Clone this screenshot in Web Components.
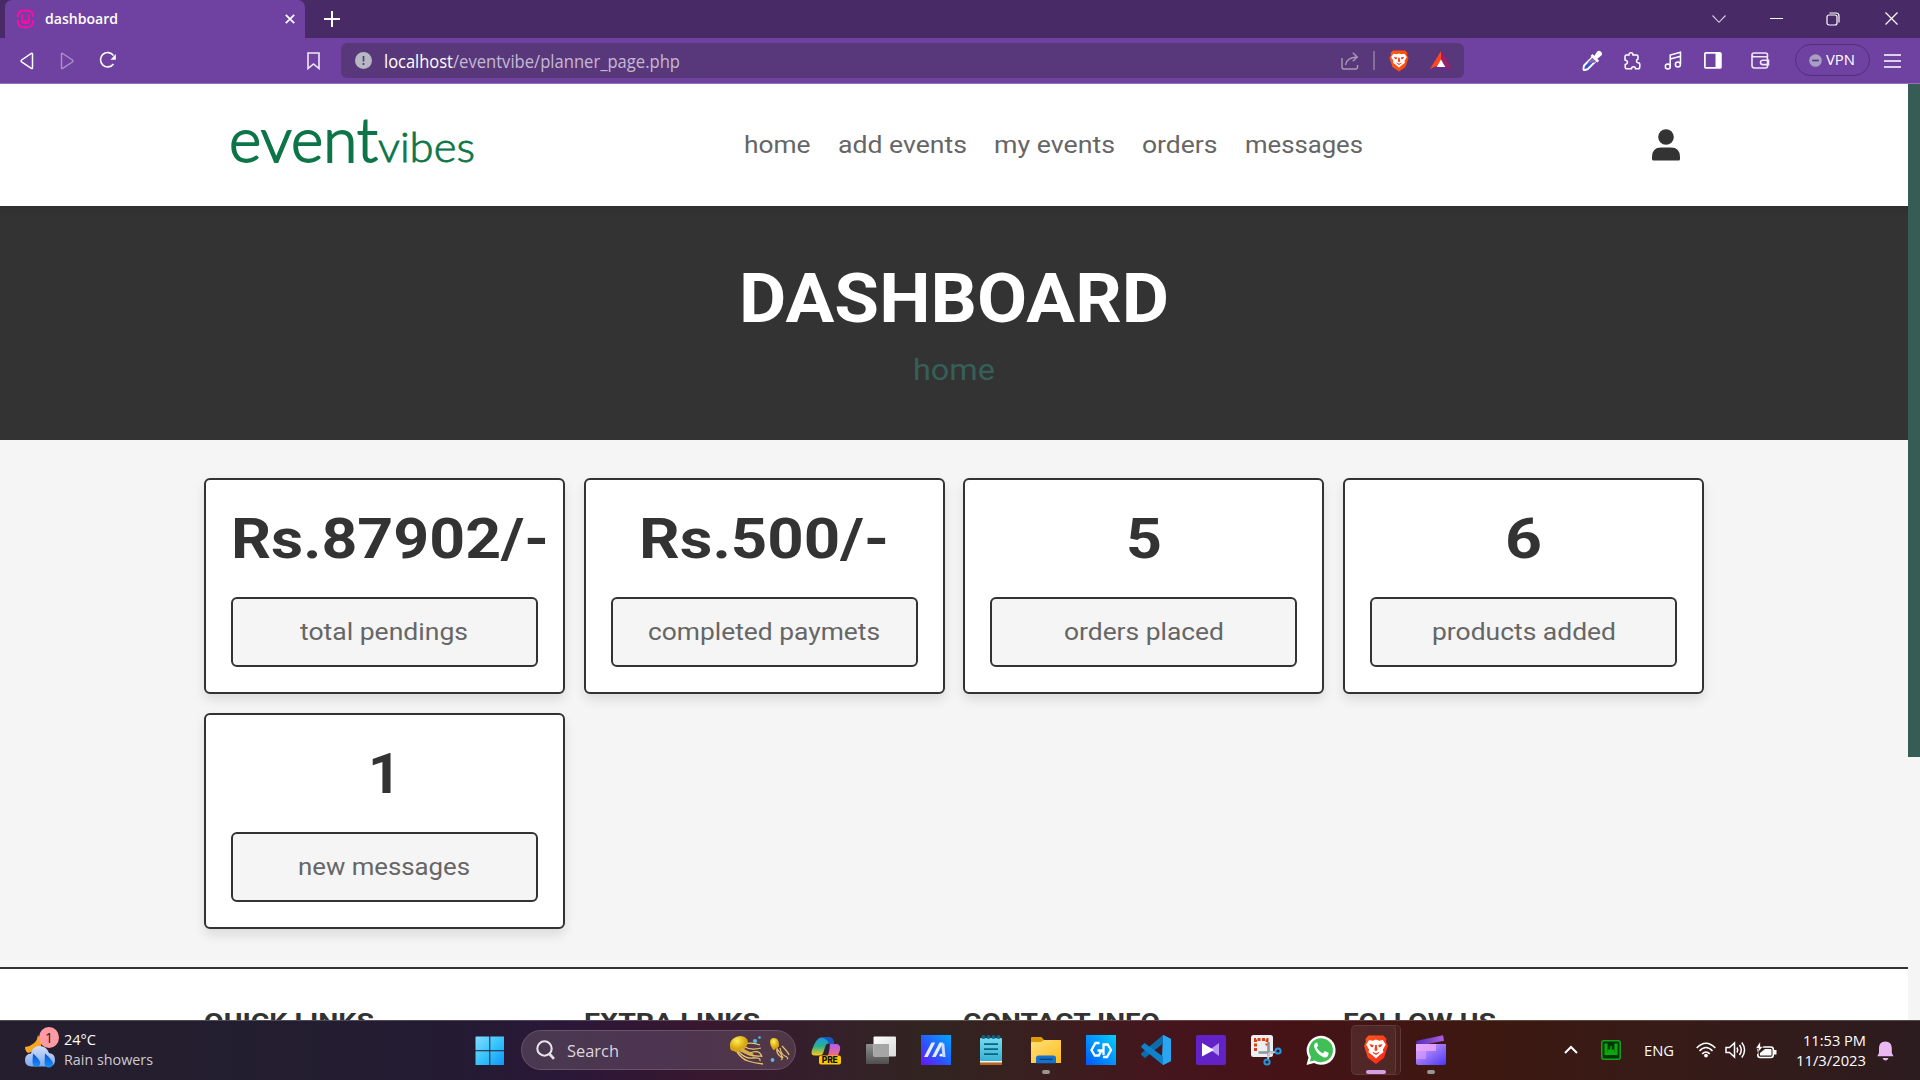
<!DOCTYPE html>
<html lang="en">
<head>
<meta charset="utf-8">
<title>dashboard</title>
<style>
html,body{margin:0;padding:0}
body{width:1920px;height:1080px;overflow:hidden;font-family:Roboto,"Liberation Sans",sans-serif;background:#f5f5f5}
</style>
</head>
<body>
<desktop-screen></desktop-screen>
<script>
// Icons, each drawn in a viewBox equal to its pixel size.
const lion = `<path d="M5 1.500h12l2.500 2.500-.5 2 1.500 3-3 9-6.500 4.500L4.500 18l-3-9L3 6l-.5-2z" fill="url(#bg)"/><path d="M5.500 4.800l3 .5 2.500-.8 2.500.8 3-.5 2.300 3.300-2.300 4 .5 1.700-3 2.200-3 2.500-3-2.500-3-2.200.5-1.700-2.300-4z" fill="#fff"/><path d="M5.800 7.800l3.400.8-.6 1.600-1.600-.2zM16.200 7.800l-3.400.8.6 1.600 1.600-.2zM10.400 8.500h1.200l.6 3.700-1.200 1-1.200-1zM8.200 13.500l2.800 1.200 2.800-1.200-.6 1.100L11 15.900l-2.200-1.300z" fill="#f2401b"/>`;
const ICONS = {
 favicon:[19,20,`<g fill="none" stroke="#ff0aa8" stroke-width="2"><path d="M2 8V6Q2.500 1.500 9.500 1.500T17 6v2M2 11v3q.5 4.500 7.500 4.500T17 14v-3"/><path d="M6.200 5.500V11q0 3 1.800 3 1.500 0 1.500-3 0 3 1.500 3 1.800 0 1.800-3V5.500" stroke-width="1.800"/></g>`],
 tabx:[10,10,`<path d="M.8.800l8.400 8.400M9.200.800L.8 9.200" stroke="#fff" stroke-width="1.700"/>`],
 plus:[16,16,`<path d="M8 0v16M0 8h16" stroke="#fff" stroke-width="2"/>`],
 chev:[14,8,`<path d="M.5.500L7 7.300 13.500.500" fill="none" stroke="#d8d0e2" stroke-width="1.100"/>`],
 min:[13,2,`<path d="M0 .5h13" stroke="#fff" stroke-width="1"/>`],
 restore:[14,14,`<g fill="none" stroke="#fff" stroke-width="1.200"><rect x="1" y="3" width="10" height="10" rx="2"/><path d="M3.500 1H10q3 0 3 3v6.500"/></g>`],
 close:[13,13,`<path d="M.5.500l12 12M12.500.500l-12 12" stroke="#fff" stroke-width="1.200"/>`],
 back:[14,18,`<path d="M12.500 2.200v13.600q0 1.200-1.200.5L1.600 10q-1-1 0-2l9.700-6.500q1.200-.6 1.200.7z" fill="none" stroke="#fff" stroke-width="1.500"/>`],
 fwd:[14,18,`<path d="M1.500 2.200v13.600q0 1.200 1.200.5l9.700-6.300q1-1 0-2L2.700 1.500q-1.200-.6-1.200.7z" fill="none" stroke="#ad8fcb" stroke-width="1.400"/>`],
 reload:[18,18,`<path d="M14.500 4.500A7.200 7.200 0 1 0 14.500 13" fill="none" stroke="#fff" stroke-width="1.600"/><path d="M16.800 3v5.800h-5.300z" fill="#fff"/>`],
 mark:[13,18,`<path d="M1 1h11v15.500L6.500 12 1 16.500z" fill="none" stroke="#eee8f5" stroke-width="1.600"/>`],
 info:[17,17,`<circle cx="8.500" cy="8.500" r="8.500" fill="#b7b8c1"/><path d="M8.500 4v5.500M8.500 11v2" stroke="#59387b" stroke-width="1.700"/>`],
 share:[18,18,`<path d="M1 6v9q0 2 2 2h11.500q2 0 2-2v-2M4.500 13Q5.500 5.500 16 5M11.800.800L16.300 5l-4.500 4.300" fill="none" stroke="#a79ab5" stroke-width="1.400"/>`],
 sep:[2,19,`<path d="M1 0v19" stroke="#9c8bad" stroke-width="1.300"/>`],
 brave:[22,24,`<defs><linearGradient id="bg"><stop stop-color="#ff5a1c"/><stop offset="1" stop-color="#ff4a00"/></linearGradient></defs>`+lion],
 bat:[22,20,`<path d="M11 0L0 18l11-5z" fill="#ff4724"/><path d="M11 0l11 18-5-1z" fill="#9e1f63"/><path d="M11 0v8l6 9 5 1z" fill="#9e1f63"/><path d="M0 19h22l-5-3H5z" fill="#662d91"/><path d="M11 8.500L15.300 16H6.700z" fill="#fff"/>`],
 pick:[20,22,`<path d="M3 20q-2 .5-1.500-1.500l.5-3L11 6.500l3.700 3.700-9 9z" fill="#3856c7" stroke="#fff" stroke-width="1.900"/><path d="M5.500 12.500L11 7l3.700 3.700-2 2z" fill="#8d62b4"/><path d="M9.500 5l6.700 6.700M12 8.500l4.500-5.200" stroke="#fff" stroke-width="2.600"/><path d="M12 6.500l3-4.700q2-2 4 0t.3 3.800L14.500 9.500z" fill="#fff"/>`],
 puzzle:[18,18,`<path d="M2 4.500q0-1.500 1.500-1.500H6q0-2.200 2-2.200T10 3h3.500q1.500 0 1.500 1.500V7q-1.500.3-1.500 1.900T15 10.700q1.800 0 1.800 1.300v3q0 1.800-1.800 1.800h-2.500q0-2-2-2t-2 2H4q-1.800 0-1.800-1.800v-2.500Q4.500 12 4.500 10.300T2 8z" fill="none" stroke="#fff" stroke-width="1.500"/>`],
 music:[18,19,`<g fill="none" stroke="#fff" stroke-width="1.500"><path d="M6.200 15.500V4L16.500 1.200V13M6.200 8l10.300-2.800"/><circle cx="3.800" cy="15.500" r="2.500"/><circle cx="13.900" cy="13.500" r="2.500"/></g>`],
 panel:[18,17,`<rect x=".9" y=".9" width="16" height="15" rx="1" fill="none" stroke="#fff" stroke-width="1.700"/><path d="M11.500 1h5.500v15h-5.500z" fill="#fff"/>`],
 wallet:[19,17,`<g fill="none" stroke="#eee8f5" stroke-width="1.600"><path d="M16.500 5V3q0-2-2-2H3Q1 1 1 3v10.500q0 2.500 2.500 2.500h11q2 0 2-2M1 3q0 1.800 2 1.800h11.500q2 0 2 2v7.500"/><path d="M17.500 8.200h-5.500q-2.500 0-2.500 2.200t2.500 2.200h5.500z"/></g>`],
 vdot:[13,13,`<circle cx="6.500" cy="6.500" r="6.300" fill="#a89fc4"/><path d="M3.200 6.500h6.600" stroke="#5b3a83" stroke-width="1.700"/>`],
 menu:[17,14,`<path d="M0 1h17M0 7h17M0 13h17" stroke="#fff" stroke-width="1.500"/>`],
 user:[28,32,`<ellipse cx="14" cy="8" rx="7.800" ry="7.800" fill="#333"/><path d="M0 31v-3Q0 18.500 9 18.500h10q9 0 9 9.500v2q0 1.500-1.500 1.500h-25Q0 31.500 0 30z" fill="#333"/>`],
 weather:[31,34,`<defs><linearGradient id="cl" x2="0" y2="1"><stop stop-color="#d3dffc"/><stop offset="1" stop-color="#7ea9ee"/></linearGradient><linearGradient id="dr" x2="0" y2="1"><stop stop-color="#0c4fd0"/><stop offset="1" stop-color="#1793ff"/></linearGradient></defs><path d="M13 0Q12 10 0 12q0 4 3 6l13-4V4q-2-1-3-4z" fill="#f6a623"/><path d="M6.500 31.500Q0 31 0 25t6-6.500Q7.500 11 14.500 11T24 18q6 .5 6 7t-6.500 6.500z" fill="url(#cl)"/><path d="M8 18.500q7 6 7.300 9.500-.3 3.500-3.800 3.500T7.500 28q0-3 .5-9.500zM20 18.500q7.500 6.500 8 10-.3 4-4.200 4t-4.300-4.500z" fill="url(#dr)"/>`],
 win:[30,30,`<defs><linearGradient id="wg" gradientUnits="userSpaceOnUse" x1="0" y1="0" x2="30" y2="30"><stop stop-color="#86dcff"/><stop offset=".5" stop-color="#36c4fb"/><stop offset="1" stop-color="#0a94fb"/></linearGradient></defs><path d="M1 .5h13.300v13.700H.5V1zM15.300.500H29v13.700H15.300zM.5 15.300h13.800V29H.5zM15.300 15.300H29V29H15.300z" fill="url(#wg)"/>`],
 search:[19,20,`<circle cx="8.500" cy="8.500" r="7.200" fill="none" stroke="#e8e0ea" stroke-width="2.100"/><path d="M13.500 14l4.500 4.800" stroke="#e8e0ea" stroke-width="2.600"/>`],
 jelly:[62,32,`<defs><radialGradient id="jg" cx=".4" cy=".3"><stop stop-color="#fff04d"/><stop offset="1" stop-color="#d7a514"/></radialGradient></defs><g fill="none" stroke="#e9c36c" stroke-width="1.300"><path d="M11 14q6 5 13 3t9 5M9 16q7 8 15 7t7 3M14 11q8 5 18 2M8 17q5 7 11 9t15 3M12 15q8 7 20 6M15 9q8-2 16 1"/><path d="M48 13q-1 5 3 8t1 4M51 13q1 6 5 8t2 3M48 14q4 4 6 9M53 11q6 6 7 9" stroke-width="1.200"/></g><path d="M1 12Q0 5 7 2t11 2q2 3-1 8-1 3-6 3-3 4-6 1Q1 16 1 12z" fill="url(#jg)"/><path d="M41 7q0-4 4-4 5 0 5 7 0 3-3 3-2 4-4 0-2-3-2-6z" fill="url(#jg)"/><path d="M13 13l12 6-3 2-12-5z" fill="#d8ad4b"/><circle cx="26" cy="6" r="2.100" fill="#59b9e8"/><circle cx="30.500" cy="2.500" r="1.300" fill="#59b9e8"/><circle cx="43.500" cy="25" r="1.900" fill="#59b9e8"/>`],
 copilot:[30,28,`<defs><linearGradient id="c1" x2="0" y2="1"><stop stop-color="#1798e8"/><stop offset=".5" stop-color="#2fb08d"/><stop offset="1" stop-color="#ffcb18"/></linearGradient><linearGradient id="c2" x2="0" y2="1"><stop stop-color="#b15cf0"/><stop offset="1" stop-color="#ff6d6d"/></linearGradient></defs><path d="M0 13Q4 1 9 .5h9q3 0 4 6h-6q-2 0-3 4l-2 6q-1 2-4 2H3q-5 0-3-5.500z" fill="url(#c1)"/><path d="M9 .5h9q3 0 4 6h-5q-2-5-8-6z" fill="#1657c4"/><path d="M18 7h7q4 1 3 6l-3 8H14q3-1 4-14z" fill="url(#c2)"/><rect x="7" y="18.500" width="22" height="9" rx="2" fill="#ffc900"/><text x="9.800" y="26.200" font-family="Inter,sans-serif" font-size="8.500" font-weight="800" textLength="16" fill="#111">PRE</text>`],
 task:[31,29,`<defs><linearGradient id="t1" x2="1" y2="1"><stop stop-color="#fff"/><stop offset="1" stop-color="#d8d8d8"/></linearGradient><linearGradient id="t2" x2="0" y2="1"><stop stop-color="#8e8e8e"/><stop offset="1" stop-color="#4f4f4f"/></linearGradient></defs><rect y="8" width="23" height="20" rx="1" fill="url(#t2)"/><rect x="7.500" y=".5" width="22.500" height="20" rx="1" fill="url(#t1)"/><path d="M7.500 8H23v12.500H7.500z" fill="#a6a6a6"/>`],
 ma:[30,30,`<defs><linearGradient id="m1" x1="0" y1="1" x2="1" y2="0"><stop stop-color="#6a12ff"/><stop offset=".5" stop-color="#245fff"/><stop offset="1" stop-color="#00a8ff"/></linearGradient></defs><path d="M0 0h30v30H0z" fill="url(#m1)"/><path d="M3 22L10.500 7.500h3.700L6.700 22zM11 22L18.500 7.500h3.700L14.700 22z" fill="#e4ecff"/><path d="M20.300 8.500h3L24.500 22h-3z" fill="#cfdcff"/><circle cx="20" cy="20.200" r="1.400" fill="#fff"/>`],
 note:[23,30,`<defs><linearGradient id="n1" x2="0" y2="1"><stop stop-color="#76d9ee"/><stop offset="1" stop-color="#37b1d3"/></linearGradient></defs><path d="M0 27h22v3H0z" fill="#b5651d"/><path d="M0 24h22v3.500H0z" fill="#f2f2f2"/><rect y="3" width="22" height="23" rx="1" fill="url(#n1)"/><path d="M4 9.200h14M4 14.200h14M4 19.200h14" stroke="#066583" stroke-width="1.800"/><g fill="#086989"><circle cx="3.500" cy="2" r="2"/><circle cx="8.500" cy="2" r="2"/><circle cx="13.500" cy="2" r="2"/><circle cx="18.500" cy="2" r="2"/></g>`],
 folder:[30,28,`<defs><linearGradient id="f1" x2="1" y2="1"><stop stop-color="#ffe07a"/><stop offset="1" stop-color="#ffbd1c"/></linearGradient></defs><path d="M0 2Q0 1 1 1h9q1 0 3 3h16q1 0 1 1v8H0z" fill="#dc9b06"/><path d="M0 7q0-1 1-1h9l3-2h16q1 0 1 1v22H0z" fill="url(#f1)"/><path d="M5 27.300V22q0-2.500 2.500-2.500h15Q25 19.500 25 22v5.300z" fill="#1272cc"/><path d="M8.500 23.300h13" stroke="#07417d" stroke-width="1.300"/>`],
 gg:[30,30,`<defs><linearGradient id="g1" x1="0" y1="1" x2="1" y2="0"><stop stop-color="#0058ff"/><stop offset="1" stop-color="#00d0ff"/></linearGradient></defs><path d="M0 0h30v30H0z" fill="url(#g1)"/><path d="M13.500 8H9.500L5.500 15l3.300 5.500h4l2.700-5H11.500M17 22h4l4-7-3.300-5.500h-4.200V20" fill="none" stroke="#fff" stroke-width="2.300"/>`],
 code:[30,30,`<path d="M22 0l8 4v22l-8 4-1-8z" fill="#2aa5f0"/><path d="M22 0v8.500L4 23l-3.700-3L0 18.500z" fill="#0a6dac"/><path d="M0 11.500L3.500 8 22 21.500V30L1 13z" fill="#0e83cb"/><path d="M22 0l8 4v22l-8 4z" fill="#2aa5f0"/>`],
 vidp:[30,30,`<rect width="30" height="30" rx="2" fill="#6322c8"/><path d="M23 8v13l-9-6.500z" fill="#b798ea"/><path d="M6 8l12 7-12 6.500z" fill="#fff"/>`],
 snip:[31,31,`<rect width="22" height="22" rx="2.500" fill="#eeeff2"/><path d="M4.500 16V4.500H16v6" fill="none" stroke="#d9400f" stroke-width="3" stroke-dasharray="3 1.500"/><path d="M17.500 7v14M7.500 17.500h15" stroke="#8f959e" stroke-width="2.600"/><path d="M18 18l-1 6M18 18l6-1" stroke="#ccc" stroke-width="2"/><g fill="none" stroke="#209ae2" stroke-width="2"><circle cx="27" cy="16" r="2.600"/><circle cx="16" cy="27" r="2.600"/></g>`],
 wa:[31,31,`<path d="M.5 30l2-7.500A14.500 14.500 0 1 1 8 28z" fill="#fff"/><path d="M3.800 26.600l1.200-4.700a12 12 0 1 1 3.800 3.600z" fill="#3fbf55"/><path d="M10.500 7.500q-3 1-2.300 4.500 2 7 9.300 10.300 4 1 5-3v-1.500l-3.600-1.900-2 2.300q-4-1.500-6-5.800l1.300-1.900-1.200-3z" fill="#fff"/>`],
 brave2:[26,31,`<defs><linearGradient id="bg" x2="1" y2="1"><stop stop-color="#ff5b1c"/><stop offset="1" stop-color="#ff1f18"/></linearGradient></defs><g transform="translate(-.8 -1.500) scale(1.250 1.350)">${lion}</g>`],
 clip:[31,31,`<defs><linearGradient id="k1" x2="1" y2="1"><stop stop-color="#e0a8fa"/><stop offset="1" stop-color="#4a38f5"/></linearGradient><linearGradient id="k2"><stop stop-color="#4d30b8"/><stop offset="1" stop-color="#b05ce8"/></linearGradient></defs><path d="M0 6L27 .3l1 5.400L1 11z" fill="url(#k2)"/><path d="M0 9h30v19q0 2-2 2H2q-2 0-2-2z" fill="url(#k1)"/><path d="M0 9h20v7H0z" fill="#efaafa" opacity=".75"/><path d="M0 16h10v8H0z" fill="#e0a0ff" opacity=".6"/>`],
 up:[14,8,`<path d="M1 7l6-6 6 6" fill="none" stroke="#fff" stroke-width="2"/>`],
 wamp:[20,20,`<rect x=".8" y=".8" width="18.400" height="18.400" rx="2" fill="#03350a" stroke="#17a41c" stroke-width="1.500"/><path d="M5 3.500v10h3.500V11h3v2.500H15v-10" fill="none" stroke="#0aa80a" stroke-width="3.200"/><path d="M10 6v6" stroke="#0aa80a" stroke-width="1.500"/>`],
 wifi:[20,16,`<g fill="none" stroke="#fff" stroke-width="1.600"><path d="M.7 6Q10-3.500 19.300 6"/><path d="M3.500 9Q10 2 16.500 9"/><path d="M6.200 11.800q3.800-3.600 7.600 0"/></g><circle cx="10" cy="13.600" r="1.900" fill="#fff"/>`],
 sound:[21,18,`<g fill="none" stroke="#fff" stroke-width="1.500"><path d="M1 6.500h3.500L9.500 2v14l-5-4.500H1z"/><path d="M12 6.500q1.500 2.500 0 5M14.500 4q3.500 5 0 10M16.800 1.500q5.500 7.500 0 15"/></g>`],
 battery:[21,17,`<rect x="1.800" y="5" width="15.500" height="10.500" rx="2.500" fill="none" stroke="#fff" stroke-width="1.600"/><path d="M4 13.500V11L9 7h5.500q1 0 1 1v5.500zM18 8h2.500v4.500H18z" fill="#fff"/><path d="M4.500-1L-.5 6.500h3L1 12l6-7.500H4.500z" fill="#fff" stroke="#371b17" stroke-width=".8"/>`],
 bell:[17,20,`<path d="M.3 15.300L2 12V7Q2 .5 8.300.500T14.800 7v5l1.700 3.300z" fill="#ebb9f2"/><path d="M5.500 17h6q-1 2.500-3 2.500t-3-2.500z" fill="#ebb9f2"/>`]
};

const define=(name,html,hook)=>customElements.define(name,class extends HTMLElement{
  connectedCallback(){
    if(this.shadowRoot)return;
    const t=document.createElement('template');
    t.innerHTML=typeof html==='function'?html(this):html;
    this.attachShadow({mode:'open'}).append(document.importNode(t.content,true));
    if(hook)hook(this);
  }
});
// A single line of text set to an exact measure.
define('fit-text',`<style>:host{display:block;flex:none;white-space:nowrap}span{display:inline-block;transform-origin:0 0}</style><span><slot></slot></span>`,el=>{
  const w=+el.getAttribute('w'),s=el.shadowRoot.querySelector('span');
  el.style.width=w+'px';
  const fit=()=>{s.style.transform='none';const n=s.getBoundingClientRect().width;if(n)s.style.transform=`scaleX(${w/n})`};
  fit();requestAnimationFrame(fit);
});
define('ui-icon',el=>{const[w,h,b]=ICONS[el.getAttribute('name')];return `<style>:host{display:block;flex:none;width:${w}px;height:${h}px}svg{display:block;overflow:visible}</style><svg width="${w}" height="${h}" viewBox="0 0 ${w} ${h}">${b}</svg>`});

// Builds a horizontal strip: each entry is [start, width, markup, vertical nudge].
const strip=(items,from=0)=>{let p=from;return items.map(([x,w,h,dy=0])=>{const m=x-p;p=x+w;return `<div style="flex:none;width:${w}px;margin-left:${m}px;margin-top:${dy*2}px">${h}</div>`}).join('')};
const ic=n=>`<ui-icon name="${n}"></ui-icon>`;
const icAt=(n,x,dy)=>[x,ICONS[n][0],ic(n),dy];
const tx=(s,w,style='')=>`<fit-text w="${w}" style="${style}">${s}</fit-text>`;

define('browser-tabs',`<style>:host{display:flex;align-items:center;height:38px;background:#472a66}
.tab{display:flex;align-items:center;width:300px;height:38px;margin-left:5px;background:#6f42a1;border-radius:7px 7px 0 0;flex:none;color:#fff;font:600 14px/20px "Open Sans",sans-serif}</style>
<div class="tab">${strip([icAt('favicon',11),[40,73,tx('dashboard',73)],icAt('tabx',280)])}</div>
${strip([icAt('plus',324),icAt('chev',1712),icAt('min',1770),icAt('restore',1826,-.5),icAt('close',1885,-.5)],305)}`);

define('browser-toolbar',`<style>:host{display:flex;align-items:center;height:45px;background:#6f42a1;border-bottom:1px solid #9273b6}
.url{display:flex;align-items:center;height:35px;width:1123px;margin-left:21px;border-radius:6px;background:#58387b;flex:none;font:17.500px/24px "Open Sans",sans-serif;color:#c5b8d3}
.vpn{display:flex;align-items:center;box-sizing:border-box;width:75px;height:32px;border:1px solid #50307c;border-radius:16px;font:14.500px/20px "Open Sans",sans-serif;color:#fff}</style>
${strip([icAt('back',20),icAt('fwd',60),icAt('reload',99,-.5),icAt('mark',307)])}
<div class="url">${strip([icAt('info',14),[43,69,tx('localhost',69,'color:#fff')],[112,227,tx('/eventvibe/planner_page.php',227)],icAt('share',1000),icAt('sep',1032),icAt('brave',1047),icAt('bat',1089)])}</div>
${strip([icAt('pick',1582),icAt('puzzle',1623),icAt('music',1664),icAt('panel',1703.5),icAt('wallet',1751),[1795,75,`<div class="vpn">${strip([icAt('vdot',13),[30,29,tx('VPN',29),-.5]])}</div>`,-.5],icAt('menu',1884)],1464)}`);

define('site-header',`<style>:host{display:flex;align-items:center;height:122px;background:#fff;color:#666;font-size:24px;line-height:30px}
.logo{display:flex;align-items:baseline;align-self:flex-start;margin:25px 0 0 229px;width:246px;color:#0d7548;font:300 61px/60px Lato,sans-serif}</style>
<div class="logo">${tx('event',149,'-webkit-text-stroke:1.8px #0d7548')}${tx('vibes',97,'font-size:41.5px;-webkit-text-stroke:.8px #0d7548')}</div>
${strip([[743.5,66.5,tx('home',66.5)],[837.5,129,tx('add events',129)],[993.5,121,tx('my events',121)],[1141.5,75.5,tx('orders',75.5)],[1244.5,118,tx('messages',118)],icAt('user',1651.5,-.5)],475)}`);

define('page-hero',`<style>:host{display:flex;flex-direction:column;align-items:center;box-sizing:border-box;height:234px;padding-top:53px;background:linear-gradient(#2f2f2f,#333 12px)}
.t{font:700 68px/80px Roboto,sans-serif;color:#fff}.h{font:30px/40px Roboto,sans-serif;color:#365f58;margin-top:11px}</style>
<div class="t">${tx('DASHBOARD',430)}</div><div class="h">${tx('home',82)}</div>`);

define('stat-card',el=>`<style>:host{display:block;box-sizing:border-box;min-width:0;height:216px;padding:25px;background:#fff;border:2px solid #333;border-radius:6px;box-shadow:0 6px 12px rgba(0,0,0,.1)}
.n{display:flex;justify-content:${+el.getAttribute('w')>306?'flex-start':'center'};height:68px;font:700 56px/68px Roboto,sans-serif;color:#333;margin-bottom:24px}
.l{display:flex;align-items:center;justify-content:center;box-sizing:border-box;height:70px;border:2px solid #333;border-radius:6px;background:#f5f5f5;color:#666;font:24px/30px Roboto,sans-serif}</style>
<div class="n">${tx(el.getAttribute('value'),el.getAttribute('w'))}</div><div class="l">${tx(el.getAttribute('label'),el.getAttribute('lw'))}</div>`);

define('stat-grid',`<style>:host{display:grid;grid-template-columns:repeat(4,minmax(0,1fr));gap:19px 18.750px;box-sizing:border-box;height:527px;align-content:start;width:1500px;margin:0 auto;padding-top:38px}</style>
<stat-card value="Rs.87902/-" w="318" label="total pendings" lw="168"></stat-card>
<stat-card value="Rs.500/-" w="250" label="completed paymets" lw="232"></stat-card>
<stat-card value="5" w="36" label="orders placed" lw="160"></stat-card>
<stat-card value="6" w="37" label="products added" lw="184"></stat-card>
<stat-card value="1" w="33" label="new messages" lw="172"></stat-card>`);

define('site-footer',`<style>:host{display:block;background:#fff;border-top:2px solid #333;height:51px;overflow:hidden}
.g{display:grid;grid-template-columns:repeat(4,minmax(0,1fr));gap:18.750px;width:1500px;margin:0 auto;padding-top:37.500px;font:700 24.600px/30px Roboto,sans-serif;color:#333}</style>
<div class="g">${tx('QUICK LINKS',170)}${tx('EXTRA LINKS',176)}${tx('CONTACT INFO',197)}${tx('FOLLOW US',153)}</div>`);

define('scroll-bar',`<style>:host{display:block;width:12px;background:#f5f5f5}div{height:673px;background:#355d56}</style><div></div>`);

define('weather-widget',`<style>:host{display:flex;position:relative;color:#fff;font:15px/20px "Open Sans",sans-serif}
.i{margin-top:8px}.b{position:absolute;left:14px;top:0;width:20px;height:21px;border-radius:50%;background:#ff99a4;color:#222;font:14px/21px "Open Sans",sans-serif;text-align:center}
.t{margin:2px 0 0 8px}.s{color:#cfcad2}</style><div class="i">${ic('weather')}</div><div class="b">1</div><div class="t">${tx('24°C',32)}<div class="s">${tx('Rain showers',89)}</div></div>`);

define('search-pill',`<style>:host{display:flex;align-items:center;box-sizing:border-box;width:275px;height:40px;border:1px solid #695369;border-radius:20px;background:linear-gradient(90deg,#493850,#4d3450 50%,#503746);color:#ddd5de;font:17px/24px "Open Sans",sans-serif}</style>
${strip([icAt('search',14),[45,52,tx('Search',52),.5],icAt('jelly',207,.5)])}`);

define('task-app',el=>{const on=el.hasAttribute('active');return `<style>:host{display:flex;flex-direction:column;align-items:center;justify-content:center;position:relative;box-sizing:border-box;width:${on?50:44}px;height:50px;border-radius:5px;${on?'background:linear-gradient(90deg,rgba(255,255,255,.08) 44px,rgba(255,255,255,.04) 44px);border:1px solid rgba(255,255,255,.09)':''}}
b{position:absolute;left:0;top:0;bottom:0;width:43px;border-right:1px solid rgba(255,255,255,.1);border-radius:0 5px 5px 0;display:${on?'block':'none'}}
i{position:absolute;bottom:${on?0:1}px;height:4px;border-radius:2px;width:${el.getAttribute('run')||0}px;background:${on?'#d79fe4':'#9c9492'}}</style>${ic(el.getAttribute('name'))}<b></b><i></i>`});
const app=(n,x,extra='',dy=0,w=44)=>[x-w/2,w,`<task-app name="${n}" ${extra}></task-app>`,dy];

define('task-bar',`<style>:host{display:flex;align-items:center;box-sizing:border-box;height:60px;color:#fff;font:15px/20px "Open Sans",sans-serif;
background:linear-gradient(90deg,#251e2e 0,#231e2f 250px,#241b33 460px,#2b1738 570px,#38172f 700px,#34202a 830px,#312420 930px,#37211f 1010px,#45151d 1170px,#451316 1300px,#3d1811 1480px,#371b17 1660px,#2c1b1f 1920px);box-shadow:inset 0 1px 0 rgba(255,255,255,.2)}
.c{display:flex;flex-direction:column;align-items:flex-end}</style>
${strip([[25,130,'<weather-widget></weather-widget>',-2],icAt('win',475,1),[521,275,'<search-pill></search-pill>'],
app('copilot',826.5,'',1),app('task',881.5),app('ma',936),app('note',991),app('folder',1046,'run="8"'),app('gg',1101),app('code',1156),app('vidp',1211),app('snip',1266.5),app('wa',1321),app('brave2',1376,'active run="20"',0,50),app('clip',1431,'run="8"'),
icAt('up',1564),icAt('wamp',1601),[1644,30,tx('ENG',30),-.5],icAt('wifi',1696),icAt('sound',1725),icAt('battery',1756),[1786,80,`<div class="c">${tx('11:53 PM',63)}${tx('11/3/2023',70)}</div>`,-.5],icAt('bell',1877,.5)])}`);

define('desktop-screen',`<style>:host{display:flex;flex-direction:column;width:1920px;height:1080px;overflow:hidden}
.v{display:flex;height:936px;flex:none}main{width:1908px;background:#f5f5f5}</style>
<browser-tabs></browser-tabs><browser-toolbar></browser-toolbar>
<div class="v"><main><site-header></site-header><page-hero></page-hero><stat-grid></stat-grid><site-footer></site-footer></main><scroll-bar></scroll-bar></div>
<task-bar></task-bar>`);
</script>
</body>
</html>
